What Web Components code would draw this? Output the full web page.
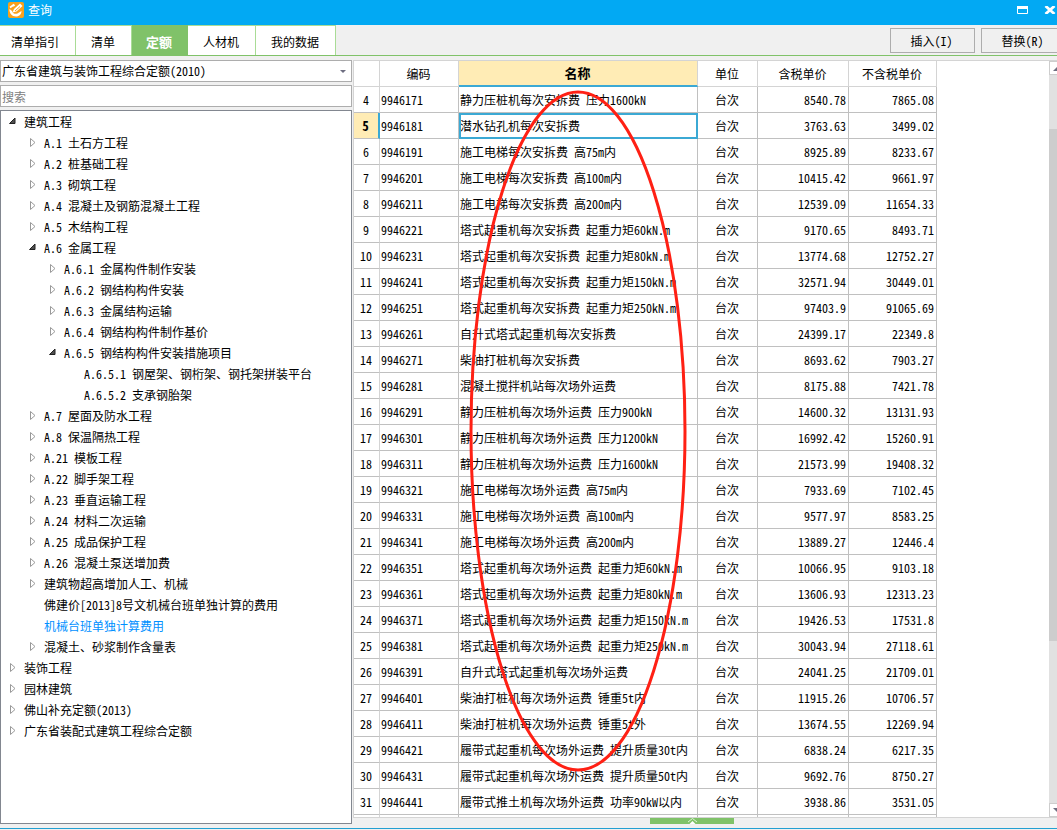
<!DOCTYPE html>
<html lang="zh-CN">
<head>
<meta charset="utf-8">
<title>查询</title>
<style>
html, body { height: 100%; }
body {
  margin: 0; overflow: hidden; background: #f0f0f0; color: #000;
  font: 12px/20px "Noto Sans Mono CJK SC", "Noto Sans CJK SC", sans-serif;
}
</style>
</head>
<body>
<query-window></query-window>

<template id="title-bar">
  <style>
    :host { display: flex; align-items: center; height: 25px; padding: 0 10px 6px 8px; box-sizing: border-box; background: #02a9f3; color: #fff; }
    h1 { flex: 1; margin: 0 0 0 4px; font: inherit; }
    button { all: unset; display: flex; margin-left: 16px; }
    svg { display: block; }
  </style>
  <svg width="16" height="16" viewBox="0 0 16 16" aria-hidden="true">
    <rect width="16" height="16" rx="2" fill="#f9a11b"/>
    <path d="M1.500 7 C1 11 4 14.500 8 14.500 C11.500 14.500 13.500 12 13.500 9 L11 10.500 C9 12.500 5 12.500 4 9 Z" fill="#fff"/>
    <path d="M4.500 10.500 L6 7 L12 1.500 L14.500 4 L8.500 9.500 Z" fill="#fff"/>
    <path d="M2 5.500 L5.500 3 L6.500 4" stroke="#fff" stroke-width="1.800" fill="none"/>
    <path d="M7 9 L12 4.500" stroke="#f9a11b" stroke-width="1"/>
  </svg>
  <h1><slot></slot></h1>
  <button aria-label="最大化"><svg width="11" height="8" viewBox="0 0 11 8"><path d="M.5 1.500h10v6H.5z" fill="none" stroke="#fff"/><path d="M0 0h11v3H0z" fill="#fff"/></svg></button>
  <button aria-label="关闭"><svg width="12" height="8" viewBox="0 0 12 8"><path d="M1.500 0l9 8M10.500 0l-9 8" stroke="#fff" stroke-width="2.800"/></svg></button>
</template>

<template id="tab-bar">
  <style>
    :host { display: flex; height: 31px; box-sizing: border-box; border-bottom: 1px solid #80c269; }
    .gap { flex: 1; }
    .actions { display: flex; gap: 6px; padding: 3px 0 2px; }
  </style>
  <slot></slot><span class="gap"></span><div class="actions"><slot name="action"></slot></div>
</template>

<template id="tab-item">
  <style>
    :host { display: flex; }
    button { all: unset; box-sizing: border-box; padding: 3px 16px 0 15px; background: #fff; border-top: 1px solid #a9dc96; border-right: 1px solid #a9dc96; text-align: center; }
    :host([first]) button { padding-left: 11px; }
    :host([selected]) button { padding: 3px 15px 0 14px; background: #80c269; border-color: #80c269; color: #fff; font-weight: bold; font-size: 13px; }
  </style>
  <button role="tab"><slot></slot></button>
</template>

<template id="action-button">
  <style>
    :host { display: flex; }
    button { box-sizing: border-box; width: 85px; padding: 0 2px 0 0; margin: 0; font: inherit; color: #000; background: #f0f0f0; border: 1px solid #adadad; border-radius: 0; }
  </style>
  <button><slot></slot></button>
</template>

<template id="quota-select">
  <style>
    :host { display: grid; align-items: center; }
    select, svg { grid-area: 1 / 1; }
    select { appearance: none; width: 100%; height: 22px; margin: 0; padding: 0 1px; box-sizing: border-box; font: inherit; color: #000; background: #fff; border: 1px solid #adadad; border-radius: 0; }
    svg { justify-self: end; margin-right: 6px; pointer-events: none; }
  </style>
  <select aria-label="定额库"><option>广东省建筑与装饰工程综合定额(2010)</option></select>
  <svg width="6" height="3" viewBox="0 0 6 3"><path d="M0 0h6L3 3z" fill="#6d6d80"/></svg>
</template>

<template id="search-box">
  <style>
    :host { display: block; }
    input { display: block; width: 100%; height: 22px; margin: 0; padding: 0 1px; box-sizing: border-box; font: inherit; background: #fff; border: 1px solid #adadad; border-radius: 0; }
    input::placeholder { color: #808080; }
  </style>
  <input type="search" placeholder="搜索" aria-label="搜索">
</template>

<template id="tree-view">
  <style>
    :host { display: block; background: #fff; border: 1px solid #828790; overflow: hidden; box-sizing: border-box; padding-left: 2px; }
  </style>
  <slot></slot>
</template>

<template id="tree-node">
  <style>
    :host { display: block; }
    .row { display: flex; align-items: center; height: 21px; white-space: nowrap; }
    .mark { width: 8px; height: 9px; margin: 0 7px 0 6px; flex: none; }
    .mark svg { display: block; }
    .kids { padding-left: 20px; }
    :host([current]) .label { color: #0090ff; }
  </style>
  <div class="row"><span class="mark"></span><span class="label"></span></div>
  <div class="kids"><slot></slot></div>
</template>

<template id="price-grid">
  <style>
    :host { display: block; position: relative; overflow: hidden; background: #fff; }
    table { border-collapse: separate; border-spacing: 0; table-layout: fixed; width: 583px; }
    th, td { box-sizing: border-box; height: 26px; padding: 0 2px 0 1px; border: 0 solid #c0c0c0; border-width: 0 1px 1px 0; font-weight: normal; text-align: center; white-space: nowrap; overflow: hidden; line-height: 20px; }
    thead th { border-color: #d4d4d4; }
    tbody th { border-right-color: #d4d4d4; }
    .text { text-align: left; }
    .num { text-align: right; }
    thead .on { background: #ffecb5; border-bottom: 2px solid #3ba9d4; font-weight: bold; font-size: 13px; }
    tbody th.on { background: #ffecb5; border-right: 2px solid #3ba9d4; font-weight: bold; font-size: 13px; }
    td.on { outline: 2px solid #3ba9d4; outline-offset: -2px; }
    .ring { position: absolute; left: 115px; top: 28px; }
  </style>
  <table>
    <colgroup><col style="width:26px"><col style="width:79px"><col style="width:239px"><col style="width:60px"><col style="width:91px"><col style="width:88px"></colgroup>
    <thead><tr><th></th><th scope="col">编码</th><th scope="col" class="on">名称</th><th scope="col">单位</th><th scope="col">含税单价</th><th scope="col">不含税单价</th></tr></thead>
    <tbody></tbody>
  </table>
  <svg class="ring" width="218" height="684" viewBox="0 0 218 684" aria-hidden="true"><ellipse cx="109" cy="342" rx="107" ry="339" fill="none" stroke="#ff2014" stroke-width="3"/></svg>
</template>

<template id="scroll-rail">
  <style>
    :host { display: flex; flex-direction: column; width: 17px; background: #e1e1e1; }
    .end { display: flex; align-items: center; justify-content: center; height: 14px; box-sizing: border-box; background: #fff; border: 1px solid #cdcdcd; flex: none; }
    .track { flex: 1; display: grid; grid-template-rows: 54fr 511fr 162fr; }
    .thumb { grid-row: 2; background: #cdcdcd; }
  </style>
  <div class="end"><svg width="10" height="5" viewBox="0 0 10 5"><path d="M5 0l5 5H0z" fill="#6d6d80"/></svg></div>
  <div class="track"><div class="thumb"></div></div>
  <div class="end"><svg width="10" height="5" viewBox="0 0 10 5"><path d="M0 0h10L5 5z" fill="#6d6d80"/></svg></div>
</template>

<template id="query-window">
  <style>
    :host { display: flex; flex-direction: column; height: 100%; width: calc(100% + 9px); }
    main { flex: 1; min-height: 0; display: flex; padding-top: 4px; gap: 1px; }
    aside { display: flex; flex-direction: column; width: 352px; flex: none; gap: 3px; }
    tree-view { flex: 1; min-height: 0; }
    section { flex: 1; min-width: 0; display: flex; flex-direction: column; }
    .frame { flex: 1; min-height: 0; display: flex; border: 1px solid #d4d4d4; border-right: 0; box-sizing: border-box; }
    price-grid { flex: 1; min-width: 0; }
    .pull { all: unset; width: 84px; height: 6px; margin-left: 297px; background: #80c269; display: flex; justify-content: center; }
    footer { height: 4px; border-bottom: 1px solid #23a0d2; margin-bottom: 1px; }
  </style>
  <title-bar>查询</title-bar>
  <tab-bar>
    <tab-item first>清单指引</tab-item><tab-item>清单</tab-item><tab-item selected>定额</tab-item><tab-item>人材机</tab-item><tab-item>我的数据</tab-item>
    <action-button slot="action">插入(I)</action-button><action-button slot="action">替换(R)</action-button>
  </tab-bar>
  <main>
    <aside>
      <quota-select></quota-select>
      <search-box></search-box>
      <tree-view>
        <tree-node label="建筑工程" state="open">
          <tree-node label="A.1 土石方工程" state="closed"></tree-node>
          <tree-node label="A.2 桩基础工程" state="closed"></tree-node>
          <tree-node label="A.3 砌筑工程" state="closed"></tree-node>
          <tree-node label="A.4 混凝土及钢筋混凝土工程" state="closed"></tree-node>
          <tree-node label="A.5 木结构工程" state="closed"></tree-node>
          <tree-node label="A.6 金属工程" state="open">
            <tree-node label="A.6.1 金属构件制作安装" state="closed"></tree-node>
            <tree-node label="A.6.2 钢结构构件安装" state="closed"></tree-node>
            <tree-node label="A.6.3 金属结构运输" state="closed"></tree-node>
            <tree-node label="A.6.4 钢结构构件制作基价" state="closed"></tree-node>
            <tree-node label="A.6.5 钢结构构件安装措施项目" state="open">
              <tree-node label="A.6.5.1 钢屋架、钢桁架、钢托架拼装平台"></tree-node>
              <tree-node label="A.6.5.2 支承钢胎架"></tree-node>
            </tree-node>
          </tree-node>
          <tree-node label="A.7 屋面及防水工程" state="closed"></tree-node>
          <tree-node label="A.8 保温隔热工程" state="closed"></tree-node>
          <tree-node label="A.21 模板工程" state="closed"></tree-node>
          <tree-node label="A.22 脚手架工程" state="closed"></tree-node>
          <tree-node label="A.23 垂直运输工程" state="closed"></tree-node>
          <tree-node label="A.24 材料二次运输" state="closed"></tree-node>
          <tree-node label="A.25 成品保护工程" state="closed"></tree-node>
          <tree-node label="A.26 混凝土泵送增加费" state="closed"></tree-node>
          <tree-node label="建筑物超高增加人工、机械" state="closed"></tree-node>
          <tree-node label="佛建价[2013]8号文机械台班单独计算的费用"></tree-node>
          <tree-node label="机械台班单独计算费用" current></tree-node>
          <tree-node label="混凝土、砂浆制作含量表" state="closed"></tree-node>
        </tree-node>
        <tree-node label="装饰工程" state="closed"></tree-node>
        <tree-node label="园林建筑" state="closed"></tree-node>
        <tree-node label="佛山补充定额(2013)" state="closed"></tree-node>
        <tree-node label="广东省装配式建筑工程综合定额" state="closed"></tree-node>
      </tree-view>
    </aside>
    <section>
      <div class="frame"><price-grid></price-grid><scroll-rail></scroll-rail></div>
      <button class="pull" aria-label="展开"><svg width="9" height="6" viewBox="0 0 9 6"><path d="M0 4l4.500-3.500L9 4" fill="none" stroke="#dff3d8"/><path d="M1.500 6l3-3 3 3z" fill="#fff"/></svg></button>
    </section>
  </main>
  <footer></footer>
</template>

<script>
class Base extends HTMLElement {
  constructor() {
    super();
    const tpl = document.getElementById(this.localName);
    this.attachShadow({ mode: 'open' }).append(tpl.content.cloneNode(true));
  }
}

class TreeNode extends Base {
  connectedCallback() {
    const state = this.getAttribute('state');
    this.shadowRoot.querySelector('.label').textContent = this.getAttribute('label');
    const marks = {
      open: '<svg width="8" height="9" viewBox="0 0 8 9"><path d="M6 1v5.500H.5z" fill="#505050" stroke="#222"/></svg>',
      closed: '<svg width="8" height="9" viewBox="0 0 8 9"><path d="M1.500 .5v8L6 4.500z" fill="#fff" stroke="#999"/></svg>'
    };
    this.shadowRoot.querySelector('.mark').innerHTML = marks[state] || '';
  }
}

const rows = [
  ['静力压桩机每次安拆费 压力1600kN', '8540.78', '7865.08'],
  ['潜水钻孔机每次安拆费', '3763.63', '3499.02'],
  ['施工电梯每次安拆费 高75m内', '8925.89', '8233.67'],
  ['施工电梯每次安拆费 高100m内', '10415.42', '9661.97'],
  ['施工电梯每次安拆费 高200m内', '12539.09', '11654.33'],
  ['塔式起重机每次安拆费 起重力矩60kN.m', '9170.65', '8493.71'],
  ['塔式起重机每次安拆费 起重力矩80kN.m', '13774.68', '12752.27'],
  ['塔式起重机每次安拆费 起重力矩150kN.m', '32571.94', '30449.01'],
  ['塔式起重机每次安拆费 起重力矩250kN.m', '97403.9', '91065.69'],
  ['自升式塔式起重机每次安拆费', '24399.17', '22349.8'],
  ['柴油打桩机每次安拆费', '8693.62', '7903.27'],
  ['混凝土搅拌机站每次场外运费', '8175.88', '7421.78'],
  ['静力压桩机每次场外运费 压力900kN', '14600.32', '13131.93'],
  ['静力压桩机每次场外运费 压力1200kN', '16992.42', '15260.91'],
  ['静力压桩机每次场外运费 压力1600kN', '21573.99', '19408.32'],
  ['施工电梯每次场外运费 高75m内', '7933.69', '7102.45'],
  ['施工电梯每次场外运费 高100m内', '9577.97', '8583.25'],
  ['施工电梯每次场外运费 高200m内', '13889.27', '12446.4'],
  ['塔式起重机每次场外运费 起重力矩60kN.m', '10066.95', '9103.18'],
  ['塔式起重机每次场外运费 起重力矩80kN.m', '13606.93', '12313.23'],
  ['塔式起重机每次场外运费 起重力矩150kN.m', '19426.53', '17531.8'],
  ['塔式起重机每次场外运费 起重力矩250kN.m', '30043.94', '27118.61'],
  ['自升式塔式起重机每次场外运费', '24041.25', '21709.01'],
  ['柴油打桩机每次场外运费 锤重5t内', '11915.26', '10706.57'],
  ['柴油打桩机每次场外运费 锤重5t外', '13674.55', '12269.94'],
  ['履带式起重机每次场外运费 提升质量30t内', '6838.24', '6217.35'],
  ['履带式起重机每次场外运费 提升质量50t内', '9692.76', '8750.27'],
  ['履带式推土机每次场外运费 功率90kW以内', '3938.86', '3531.05']
];

class PriceGrid extends Base {
  connectedCallback() {
    const body = this.shadowRoot.querySelector('tbody');
    body.innerHTML = rows.map(([name, gross, net], i) => {
      const on = i === 1 ? ' on' : '';
      return `<tr><th scope="row" class="${on}">${i + 4}</th><td class="text">${9946171 + i * 10}</td>` +
        `<td class="text${on}">${name}</td><td>台次</td><td class="num">${gross}</td><td class="num">${net}</td></tr>`;
    }).join('') + '<tr><th></th><td></td><td></td><td></td><td></td><td></td></tr>';
  }
}

customElements.define('tree-node', TreeNode);
customElements.define('price-grid', PriceGrid);
for (const name of ['title-bar', 'tab-bar', 'tab-item', 'action-button', 'quota-select', 'search-box', 'tree-view', 'scroll-rail', 'query-window']) {
  customElements.define(name, class extends Base {});
}
</script>
</body>
</html>
